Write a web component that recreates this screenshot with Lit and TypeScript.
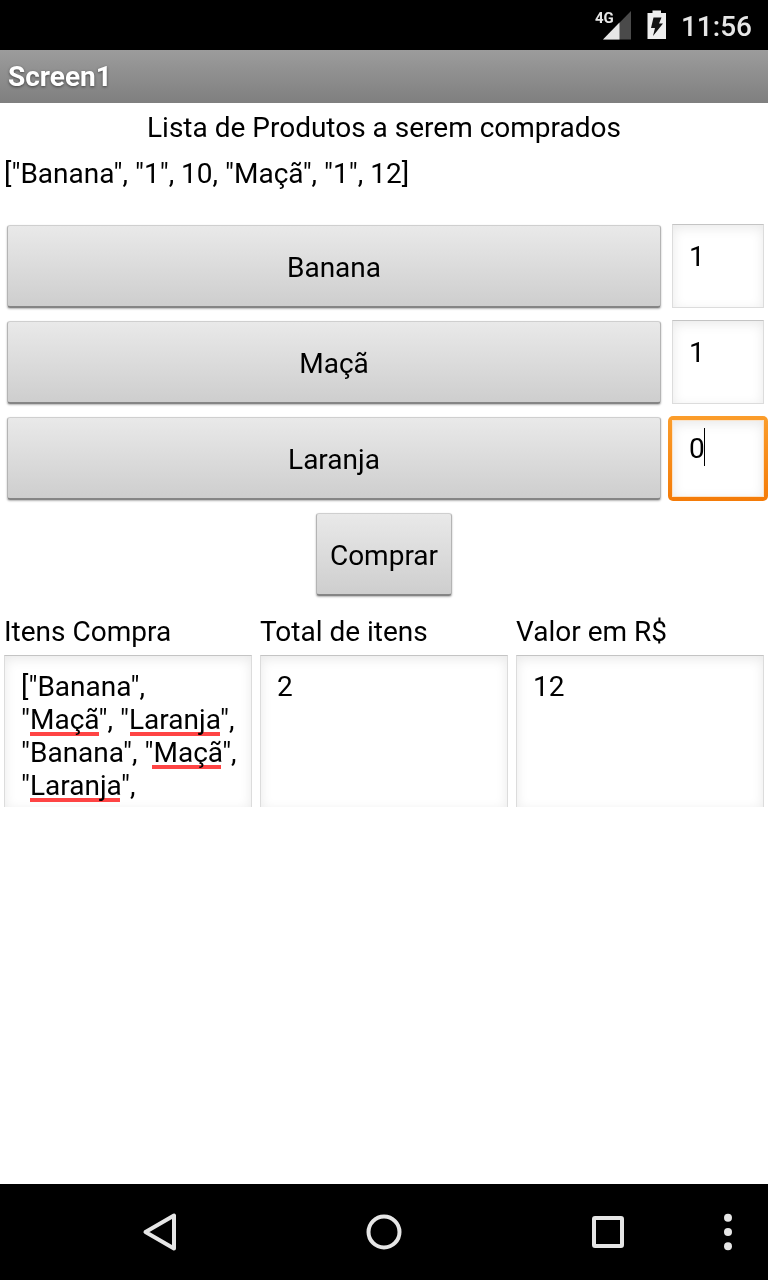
import { LitElement, html, css, svg } from "lit";
import { customElement, state } from "lit/decorators.js";

interface Product {
  id: string;
  name: string;
  quantity: string;
  active: boolean;
}

@customElement("status-bar")
class StatusBar extends LitElement {
  static styles = css`
    :host {
      display: flex;
      justify-content: flex-end;
      align-items: center;
      gap: 15px;
      height: 50px;
      padding-right: 16px;
      box-sizing: border-box;
      background: #000;
      color: #e6e6e6;
      font-family: Roboto, sans-serif;
    }
    .signal {
      position: relative;
      width: 36px;
      height: 30px;
    }
    .network {
      position: absolute;
      left: 0;
      top: 0;
      font-size: 15px;
      line-height: 16px;
      font-weight: 700;
    }
    svg {
      display: block;
    }
    .clock {
      font-size: 28px;
      line-height: 33px;
      font-weight: 500;
      padding-top: 2px;
    }
  `;

  render() {
    return html`
      <div class="signal">
        <svg width="36" height="30" viewBox="0 0 36 30" aria-hidden="true">
          <path d="M8 29.5 L36 1 V29.5 Z" fill="#4a4a4a" />
          <path d="M8 29.5 L24.5 12.5 V29.5 Z" fill="#e6e6e6" />
        </svg>
        <span class="network">4G</span>
      </div>
      <svg width="20" height="30" viewBox="0 0 20 30" role="img" aria-label="Bateria carregando">
        <path d="M1.5 3 H6.5 V0.5 H15 V3 H20 V29 H1.5 Z" fill="#eee" />
        <path d="M7.5 7.5 H15.5 L13 13.5 H17 L7 26 L9 18 H5 Z" fill="#111" />
      </svg>
      <span class="clock">11:56</span>
    `;
  }
}

@customElement("nav-bar")
class NavBar extends LitElement {
  static styles = css`
    :host {
      display: flex;
      height: 96px;
      background: #000;
    }
    .keys {
      display: flex;
      flex: 1;
      justify-content: space-between;
      margin-left: 80px;
    }
    button {
      display: flex;
      align-items: center;
      justify-content: center;
      padding: 0;
      border: 0;
      background: none;
    }
    .key {
      width: 160px;
    }
    .menu {
      width: 80px;
    }
    svg {
      fill: none;
      stroke: #e6e6e6;
      stroke-width: 4;
      stroke-linejoin: round;
    }
    .dots {
      fill: #e6e6e6;
      stroke: none;
    }
  `;

  render() {
    const key = (label: string, shape: unknown) => html`
      <button class="key" aria-label=${label}>
        <svg width="40" height="40" viewBox="0 0 40 40">${shape}</svg>
      </button>
    `;
    return html`
      <div class="keys">
        ${key("Voltar", svg`<path d="M34 3.5 V36.5 L5.5 20 Z" />`)}
        ${key("Início", svg`<circle cx="20" cy="20" r="15.5" />`)}
        ${key("Recentes", svg`<rect x="6" y="6" width="28" height="28" rx="1" />`)}
      </div>
      <button class="menu" aria-label="Mais opções">
        <svg class="dots" width="40" height="40" viewBox="0 0 40 40">
          <circle cx="20" cy="5.7" r="4" />
          <circle cx="20" cy="20" r="4" />
          <circle cx="20" cy="34.3" r="4" />
        </svg>
      </button>
    `;
  }
}

@customElement("app-root")
class AppRoot extends LitElement {
  static styles = css`
    :host {
      display: flex;
      flex-direction: column;
      min-height: 100vh;
      background: #fff;
      color: #000;
      font-family: Roboto, sans-serif;
      font-size: 28px;
      line-height: 33px;
    }
    * {
      box-sizing: border-box;
    }
    h1 {
      margin: 0;
      padding: 10px 8px;
      font-size: 28px;
      line-height: 33px;
      font-weight: 700;
      color: #fff;
      background: linear-gradient(#9c9c9c, #7f7f7f);
      text-shadow: 0 1px 3px rgba(0, 0, 0, 0.55);
    }
    main {
      flex: 1;
    }
    p {
      margin: 0;
      padding: 0 4px;
    }
    .heading {
      padding-top: 8px;
      text-align: center;
    }
    .list {
      padding-top: 13px;
    }
    .products {
      display: grid;
      gap: 12px;
      padding: 34px 4px 0 7px;
    }
    .product {
      display: grid;
      grid-template-columns: 1fr 92px;
      gap: 11px;
      align-items: end;
      height: 84px;
    }
    .button {
      height: 83px;
      padding: 2px 13px 0;
      border: 1px solid #b4b4b4;
      border-top-color: #cfcfcf;
      border-bottom: 2px solid #858585;
      border-radius: 3px;
      background: linear-gradient(#e9e9e9, #cecece);
      box-shadow: 0 1px 2px rgba(0, 0, 0, 0.3);
      font: inherit;
      color: inherit;
    }
    .field {
      display: block;
      width: 100%;
      border: 1px solid #dcdcdc;
      border-top: 1px solid #c4c4c4;
      border-radius: 0;
      outline: 0;
      background-color: #fff;
      box-shadow: inset 0 3px 12px rgba(0, 0, 0, 0.09);
      font: inherit;
      color: inherit;
    }
    .quantity {
      height: 84px;
      padding: 15px 16px 34px;
    }
    .active {
      height: 77px;
      padding: 11px 16px 31px;
      border-color: #fbe3c8;
      background: linear-gradient(#000, #000) 31px 7px / 1px 38px no-repeat #fff;
    }
    .ring {
      margin: 0 -4px -1px;
      padding: 4px;
      border-radius: 5px;
      background: linear-gradient(#fb9d2b, #f47b08);
    }
    .buy {
      display: flex;
      justify-content: center;
      padding-top: 13px;
    }
    .totals {
      display: grid;
      grid-template-columns: repeat(3, 1fr);
      gap: 8px;
      padding: 19px 4px 0;
    }
    .total label {
      display: block;
      padding-bottom: 7px;
    }
    .frame {
      position: relative;
      height: 152px;
    }
    .area {
      height: 152px;
      padding: 14px 12px 0 16px;
      border-bottom: 0;
      overflow: hidden;
      resize: none;
    }
    .spelling {
      position: absolute;
      left: 0;
      top: 0;
      pointer-events: none;
      fill: #ff4444;
      mix-blend-mode: multiply;
    }
  `;

  @state()
  products: Product[] = [
    { id: "banana", name: "Banana", quantity: "1", active: false },
    { id: "maca", name: "Maçã", quantity: "1", active: false },
    { id: "laranja", name: "Laranja", quantity: "0", active: true },
  ];

  renderProduct(product: Product) {
    return html`
      <div class="product">
        <button class="button" id=${product.id}>${product.name}</button>
        <div class=${product.active ? "ring" : ""}>
          <input
            class="field quantity ${product.active ? "active" : ""}"
            inputmode="numeric"
            aria-labelledby=${product.id}
            .value=${product.quantity}
          />
        </div>
      </div>
    `;
  }

  renderTotal(id: string, label: string, value: string, marks: unknown = "") {
    return html`
      <div class="total">
        <label for=${id}>${label}</label>
        <div class="frame">
          <textarea class="field area" id=${id} spellcheck="false" .value=${value}></textarea>
          ${marks}
        </div>
      </div>
    `;
  }

  render() {
    const items = '["Banana",\n"Maçã", "Laranja",\n"Banana", "Maçã",\n"Laranja",';
    const spelling = html`
      <svg class="spelling" width="248" height="152" aria-hidden="true">
        <rect x="26" y="77" width="69" height="4" />
        <rect x="126" y="77" width="90" height="4" />
        <rect x="148" y="110" width="69" height="4" />
        <rect x="26" y="143" width="90" height="4" />
      </svg>
    `;
    return html`
      <status-bar></status-bar>
      <h1>Screen1</h1>
      <main>
        <p class="heading">Lista de Produtos a serem comprados</p>
        <p class="list">["Banana", "1", 10, "Maçã", "1", 12]</p>
        <div class="products">${this.products.map((product) => this.renderProduct(product))}</div>
        <div class="buy"><button class="button">Comprar</button></div>
        <div class="totals">
          ${this.renderTotal("items", "Itens Compra", items, spelling)}
          ${this.renderTotal("count", "Total de itens", "2")}
          ${this.renderTotal("price", "Valor em R$", "12")}
        </div>
      </main>
      <nav-bar></nav-bar>
    `;
  }
}
